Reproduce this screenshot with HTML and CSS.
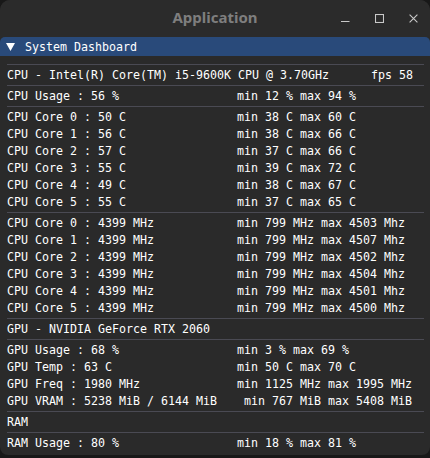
FILE: index.html
```html
<!DOCTYPE html>
<html>
<head>
<meta charset="utf-8">
<link rel="stylesheet" href="styles.css">
</head>
<body>
<div class="window">
  <div class="titlebar">
    <div></div>
    <div class="title">Application</div>
    <div class="controls">
      <svg class="ctl" viewBox="0 0 9 9" width="9" height="9"><path d="M0 7.5H8.5" /></svg>
      <svg class="ctl" viewBox="0 0 9 9" width="9" height="9"><rect x="0.5" y="0.5" width="8" height="8" /></svg>
      <svg class="ctl" viewBox="0 0 9 9" width="9" height="9"><path d="M0.6 0.6L8.4 8.4M8.4 0.6L0.6 8.4" /></svg>
    </div>
  </div>
  <div class="imwin">
    <div class="imtitle">
      <svg class="arrow" viewBox="0 0 9 8" width="9" height="8"><polygon points="0,0 9,0 4.5,8" /></svg>
      <span>System Dashboard</span>
    </div>
    <div class="content">
      <div class="sep"></div>
      <div class="line wide"><span>CPU - Intel(R) Core(TM) i5-9600K CPU @ 3.70GHz</span><span>fps 58</span></div>
      <div class="sep"></div>
      <div class="line"><span>CPU Usage : 56 %</span><span>min 12 % max 94 %</span></div>
      <div class="sep"></div>
      <div class="line"><span>CPU Core 0 : 50 C</span><span>min 38 C max 60 C</span></div>
      <div class="line"><span>CPU Core 1 : 56 C</span><span>min 38 C max 66 C</span></div>
      <div class="line"><span>CPU Core 2 : 57 C</span><span>min 37 C max 66 C</span></div>
      <div class="line"><span>CPU Core 3 : 55 C</span><span>min 39 C max 72 C</span></div>
      <div class="line"><span>CPU Core 4 : 49 C</span><span>min 38 C max 67 C</span></div>
      <div class="line"><span>CPU Core 5 : 55 C</span><span>min 37 C max 65 C</span></div>
      <div class="sep"></div>
      <div class="line"><span>CPU Core 0 : 4399 MHz</span><span>min 799 MHz max 4503 Mhz</span></div>
      <div class="line"><span>CPU Core 1 : 4399 MHz</span><span>min 799 MHz max 4507 Mhz</span></div>
      <div class="line"><span>CPU Core 2 : 4399 MHz</span><span>min 799 MHz max 4502 Mhz</span></div>
      <div class="line"><span>CPU Core 3 : 4399 MHz</span><span>min 799 MHz max 4504 Mhz</span></div>
      <div class="line"><span>CPU Core 4 : 4399 MHz</span><span>min 799 MHz max 4501 Mhz</span></div>
      <div class="line"><span>CPU Core 5 : 4399 MHz</span><span>min 799 MHz max 4500 Mhz</span></div>
      <div class="sep"></div>
      <div class="line"><span>GPU - NVIDIA GeForce RTX 2060</span></div>
      <div class="sep"></div>
      <div class="line"><span>GPU Usage : 68 %</span><span>min 3 % max 69 %</span></div>
      <div class="line"><span>GPU Temp : 63 C</span><span>min 50 C max 70 C</span></div>
      <div class="line"><span>GPU Freq : 1980 MHz</span><span>min 1125 MHz max 1995 MHz</span></div>
      <div class="line"><span>GPU VRAM : 5238 MiB / 6144 MiB</span><span> min 767 MiB max 5408 MiB</span></div>
      <div class="sep"></div>
      <div class="line"><span>RAM</span></div>
      <div class="sep"></div>
      <div class="line"><span>RAM Usage : 80 %</span><span>min 18 % max 81 %</span></div>
    </div>
  </div>
</div>
</body>
</html>
```
FILE: styles.css
```css
html, body {
  margin: 0;
  padding: 0;
  background: #181818;
}
.window {
  width: 430px;
  height: 455px;
  background: #2a2a2a;
  border-radius: 10px 10px 8px 8px;
  overflow: hidden;
  display: flex;
  flex-direction: column;
}
.titlebar {
  height: 37px;
  flex: none;
  display: grid;
  grid-template-columns: 1fr auto 1fr;
  background: #2b2b2b;
}
.title {
  font-family: "Noto Sans", "Open Sans", sans-serif;
  font-weight: 700;
  font-size: 15px;
  line-height: 20px;
  padding-top: 7px;
  color: #7e7e7e;
}
.controls {
  display: flex;
  justify-content: flex-end;
  align-items: flex-start;
  gap: 25px;
  padding-right: 12px;
  padding-top: 14px;
}
.ctl {
  display: block;
  fill: none;
  stroke: #c9c9c9;
  stroke-width: 1.1;
}
.imwin {
  flex: 1;
  display: flex;
  flex-direction: column;
}
.imtitle {
  height: 19px;
  box-sizing: border-box;
  background: #294a7a;
  border-radius: 5px 5px 0 0;
  display: flex;
  align-items: center;
  font-family: "DejaVu Sans Mono", monospace;
  font-size: 11.63px;
  line-height: 14px;
  color: #ffffff;
  white-space: pre;
}
.arrow {
  display: block;
  fill: #ffffff;
  margin-left: 6px;
  margin-right: 10px;
}
.content {
  padding: 8px 6px 0 7px;
  font-family: "DejaVu Sans Mono", monospace;
  font-size: 11.63px;
  color: #ffffff;
  display: flex;
  flex-direction: column;
}
.sep {
  height: 1px;
  width: 417px;
  background: #4a4a53;
  margin-bottom: 3px;
}
.line {
  height: 13px;
  line-height: 14px;
  margin-bottom: 4px;
  display: grid;
  grid-template-columns: 230px 1fr;
  white-space: pre;
}
.line.wide {
  grid-template-columns: 364px 1fr;
}
```
